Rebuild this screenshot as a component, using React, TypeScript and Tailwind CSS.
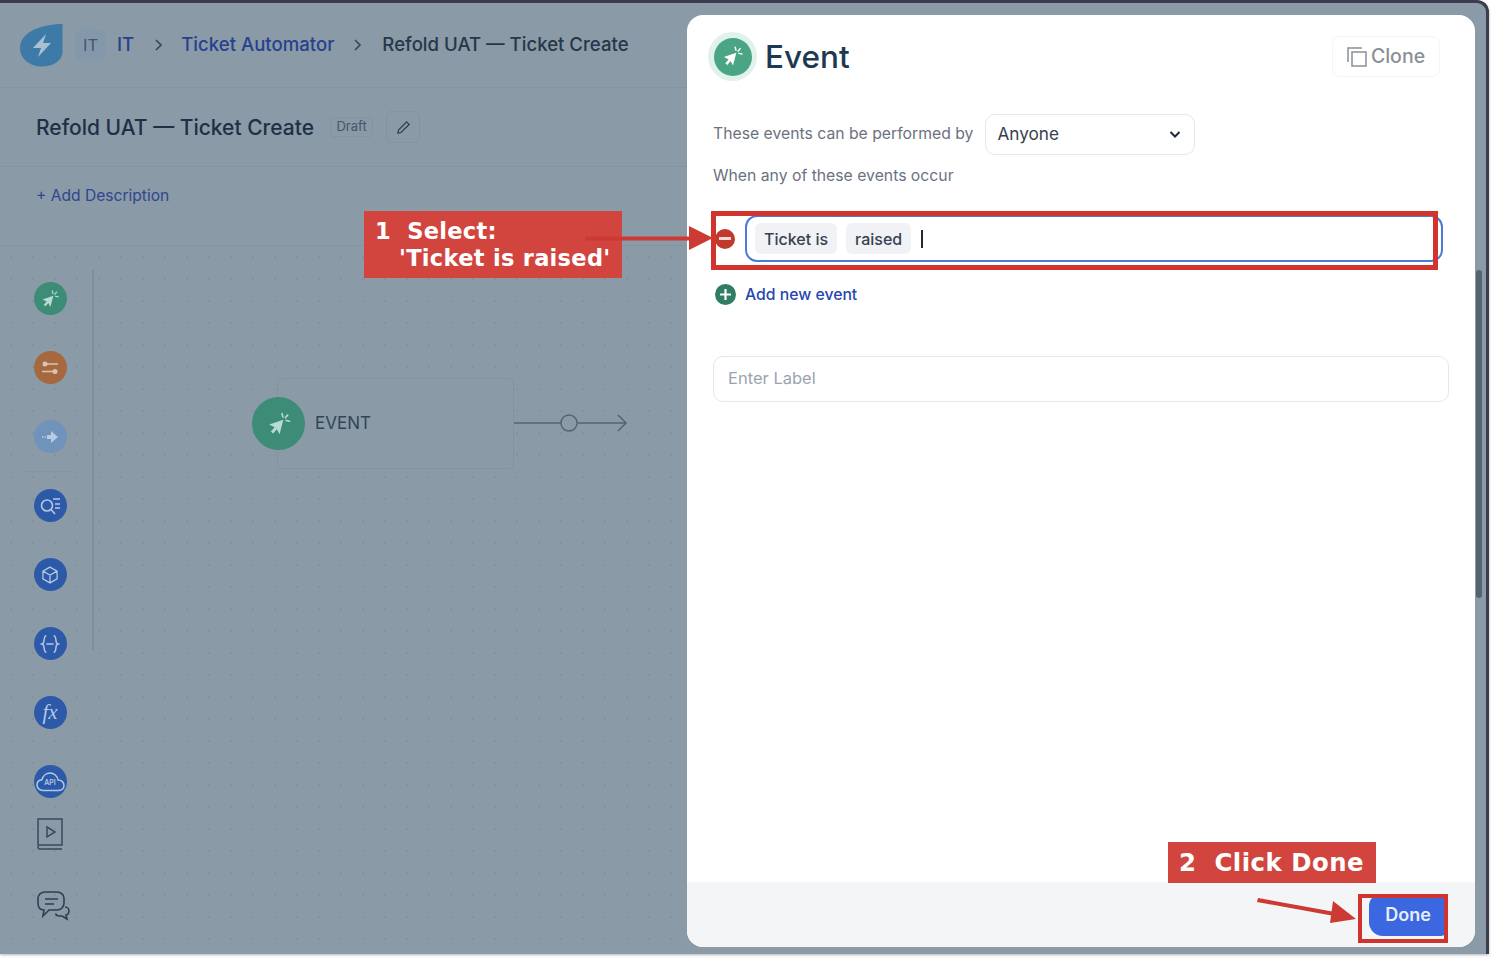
import React from "react";

const Click = ({ s = 20 }: { s?: number }) => (
  <svg width={s} height={s} viewBox="0 0 24 24" fill="none">
    <path d="M16 8 3 12.500l5 2.500-3.500 4 2 1.800 3.500-4 2.500 4.700z" fill="currentColor" />
    <path d="M14.800 2.400l.8 3M21.800 9.400l-3.200-.7M20 3.800l-2.200 2.400" stroke="currentColor" strokeWidth="1.500" strokeLinecap="round" />
  </svg>
);

const Circle = ({ c, children }: { c: string; children: React.ReactNode }) => (
  <div className={`flex h-[33px] w-[33px] items-center justify-center rounded-full ${c}`}>{children}</div>
);

export default function App() {
  return (
    <div className="relative h-[958px] w-[1494px] overflow-hidden bg-white font-['Inter',sans-serif]">
      <div className="flex h-[954px] w-[1489px] rounded-tr-xl border-t-[3px] border-r-[3px] border-[#3c3c4e] bg-[#8a9aa6] shadow-[0_1px_3px_rgba(0,0,0,0.3)]">
        {/* left column */}
        <div className="flex h-full w-[687px] flex-col">
          <div className="flex h-[85px] items-center border-b border-[#84949f] pl-[20px] text-[18.600px] font-medium">
            <svg width="43" height="43" viewBox="0 0 43 43">
              <path d="M42.500 0C26 0 0 6 0 24c0 11 10 18.500 22 18.500 11 0 20.500-6 20.500-14.500z" fill="#3e7aa8" />
              <path d="M26 10 13 24h8l-3 9 13-14h-8z" fill="#a9c0d2" />
            </svg>
            <div className="ml-[12px] flex h-[32px] w-[31px] items-center justify-center rounded-lg bg-[#8498ab] text-[16.500px] font-normal text-[#45566a]">IT</div>
            <span className="ml-[11px] text-[#27418f]">IT</span>
            <svg className="ml-[20px]" width="10" height="14" viewBox="0 0 10 14" fill="none"><path d="M2 2l5 5-5 5" stroke="#3a4a5c" strokeWidth="1.700" /></svg>
            <span className="ml-[17px] text-[#27418f]">Ticket Automator</span>
            <svg className="ml-[19px]" width="10" height="14" viewBox="0 0 10 14" fill="none"><path d="M2 2l5 5-5 5" stroke="#3a4a5c" strokeWidth="1.700" /></svg>
            <span className="ml-[19px] text-[#27374a]">Refold UAT — Ticket Create</span>
          </div>
          <div className="flex h-[79px] items-center border-b border-[#84949f] pl-[36px]">
            <span className="pt-[2px] text-[21px] font-medium text-[#1f3045]">Refold UAT — Ticket Create</span>
            <span className="ml-[16px] flex h-[20px] w-[43px] items-center justify-center rounded border border-[#84949f] text-[13px] text-[#45566a]">Draft</span>
            <span className="ml-[13px] flex h-[32px] w-[34px] items-center justify-center rounded-md border border-[#84949f] text-[#2f3f52]">
              <svg width="15" height="15" viewBox="0 0 24 24" fill="none" stroke="currentColor" strokeWidth="2"><path d="M17 3l4 4L8 20l-5 1 1-5z" /></svg>
            </span>
          </div>
          <div className="flex h-[79px] items-center border-b border-[#84949f] pb-[20px] pl-[36px] text-[15.600px] text-[#2f478f]">+ Add Description</div>
          <div className="relative flex-1 bg-[radial-gradient(circle,#82929e_1.200px,transparent_1.300px)] bg-[size:22px_22px]">
            <div className="flex w-[100px] flex-col items-center pt-[36px]">
              <Circle c="bg-[#3c8c78] text-[#b9dcd2]"><Click s={20} /></Circle>
              <div className="mt-[36px]">
                <Circle c="bg-[#a5683f] text-[#d9c4b2]">
                  <svg width="20" height="20" viewBox="0 0 20 20" fill="currentColor"><circle cx="5" cy="6" r="2.500" /><path d="M7 5.200h11v1.500H7zM2 12.700h11v1.500H2z" /><circle cx="15" cy="13.500" r="2.500" /></svg>
                </Circle>
              </div>
              <div className="mt-[36px]">
                <Circle c="bg-[#6f93bb] text-[#b8cbe0]">
                  <svg width="20" height="20" viewBox="0 0 20 20" fill="currentColor"><path d="M11 4l7 6-7 6v-4H7V8h4z" /><path d="M2 9.200h1.500v1.500H2zM4.500 9.200H6v1.500H4.500z" /></svg>
                </Circle>
              </div>
              <div className="mt-[18px] h-px w-[48px] bg-[#84949f]" />
              <div className="mt-[17px]">
                <Circle c="bg-[#2c5aa8] text-[#b5c8e4]">
                  <svg width="24" height="24" viewBox="0 0 24 24" fill="none" stroke="currentColor" strokeWidth="1.600"><circle cx="9" cy="11.500" r="5.500" /><path d="M13 15.500l4 4.500M15 5h7M17 10h5M17 14h5" /></svg>
                </Circle>
              </div>
              <div className="mt-[36px]">
                <Circle c="bg-[#2c5aa8] text-[#b5c8e4]">
                  <svg width="20" height="20" viewBox="0 0 24 24" fill="none" stroke="currentColor" strokeWidth="1.500"><path d="M12 2.500l8.500 4.800v9.400L12 21.500l-8.500-4.800V7.300zM3.500 7.300 12 12l8.500-4.700M12 12v9.500" /></svg>
                </Circle>
              </div>
              <div className="mt-[36px]">
                <Circle c="bg-[#2c5aa8] text-[#b5c8e4]">
                  <svg width="22" height="22" viewBox="0 0 24 24" fill="none" stroke="currentColor" strokeWidth="1.600"><path d="M8 3C5 3 6 8 5 10.500 4.500 11.500 3 12 3 12s1.500.5 2 1.500C6 16 5 21 8 21M16 3c3 0 2 5 3 7.500.5 1 2 1.500 2 1.500s-1.500.5-2 1.500c-1 2.500 0 7.500-3 7.500M8 12h8" /></svg>
                </Circle>
              </div>
              <div className="mt-[36px]">
                <Circle c="bg-[#2c5aa8] text-[#b5c8e4]">
                  <span className="font-['Liberation_Serif',serif] text-[21px] italic leading-none">fx</span>
                </Circle>
              </div>
              <div className="mt-[36px]">
                <div className="relative flex h-[33px] w-[33px] items-center justify-center rounded-full bg-[#2c5aa8] text-[#b5c8e4]">
                  <svg width="29" height="22" viewBox="0 0 29 22" fill="none" stroke="currentColor" strokeWidth="1.500"><path d="M7 19.500C3.500 19.500 1 17 1 14c0-3 2-5 5-5.300C7 4.500 10.500 2 14 2c4 0 7.500 3 8 7 3.500 0 6 2.500 6 5.500s-2.500 5-6 5z" /></svg>
                  <span className="absolute top-[14px] text-[7px] font-semibold leading-none">API</span>
                </div>
              </div>
              <div className="mt-[20px] text-[#3a4a5c]">
                <svg width="26" height="32" viewBox="0 0 26 32" fill="none" stroke="currentColor" strokeWidth="1.500"><path d="M1 27V1h24v26H3a2 2 0 0 0 0 4h22" /><path d="M10 9l8 5-8 5z" /></svg>
              </div>
              <div className="ml-[6px] mt-[41px] text-[#2f3f52]">
                <svg width="33" height="30" viewBox="0 0 33 30" fill="none" stroke="currentColor" strokeWidth="1.600"><path d="M8 1h12c4 0 7 3 7 6v5c0 4-3 7-7 7h-8l-6 6 1-6C3 19 1 16 1 12V7c0-3 3-6 7-6z" /><path d="M8 8h13M8 13h9" /><path d="M28 16c2.500 0 4 2 4 4s-1.500 4-3 4l1 4-5-3h-3c-1.500 0-3-1-3.500-2.500" /></svg>
              </div>
            </div>
            <div className="absolute left-[92px] top-[24px] h-[380px] w-[2px] bg-[#7f8f9c]" />
            {/* canvas node */}
            <div className="absolute left-[277px] top-[132px] h-[91px] w-[237px] rounded border border-[#84949f] bg-[#8a9aa6]" />
            <div className="absolute left-[252px] top-[151px] flex h-[53px] w-[53px] items-center justify-center rounded-full bg-[#3c8c78] text-[#b9dcd2]"><Click s={26} /></div>
            <span className="absolute left-[315px] top-[166px] text-[17px] leading-[22px] text-[#33445a]">EVENT</span>
            <svg className="absolute left-[514px] top-[165px]" width="116" height="24" viewBox="0 0 116 24" fill="none" stroke="#55656f" strokeWidth="1.500">
              <path d="M0 12h47M64 12h48M104 4l8 8-8 8" />
              <circle cx="55" cy="12" r="8" />
            </svg>
          </div>
        </div>

        {/* modal */}
        <div className="mb-[7px] mt-[12px] flex w-[788px] flex-col rounded-[16px] bg-white">
          <div className="flex h-[85px] items-center pb-[2px] pl-[21px] pr-[35px]">
            <div className="flex h-[49px] w-[49px] items-center justify-center rounded-full bg-[#e1f2ec]">
              <div className="flex h-[38px] w-[38px] items-center justify-center rounded-full bg-[#4aa585] text-white"><Click s={23} /></div>
            </div>
            <span className="ml-[8px] text-[31.500px] font-medium text-[#1e3a52]">Event</span>
            <div className="ml-auto flex h-[41px] w-[108px] items-center justify-center gap-[4px] rounded-lg border border-[#f3f4f6] text-[19.500px] font-medium text-[#8b9096]">
              <svg width="20" height="20" viewBox="0 0 20 20" fill="none" stroke="currentColor" strokeWidth="1.500"><path d="M1 15V1h14" /><path d="M5 5h14v14H5z" /></svg>
              Clone
            </div>
          </div>
          <div className="flex items-center pl-[26px] pt-[14px]">
            <span className="mb-[2px] text-[15.750px] text-[#6b7280]">These events can be performed by</span>
            <div className="ml-[12px] flex h-[41px] w-[210px] items-center justify-between rounded-[10px] border border-[#e5e7eb] pb-[2px] pl-[11px] pr-[12px] text-[17.200px] text-[#374151]">
              Anyone
              <svg width="14" height="14" viewBox="0 0 14 14" fill="none" stroke="#1f2937" strokeWidth="2"><path d="M2.500 5 7 9.500 11.500 5" /></svg>
            </div>
          </div>
          <div className="pl-[26px] pt-[11px] text-[15.750px] leading-[20px] text-[#6b7280]">When any of these events occur</div>
          <div className="flex items-center pl-[28px] pt-[29px]">
            <div className="flex h-[20px] w-[20px] items-center justify-center rounded-full bg-[#c0392b]"><span className="h-[3px] w-[12px] bg-[#f3d9d6]" /></div>
            <div className="ml-[10px] flex h-[47px] w-[698px] items-center gap-[9px] rounded-[12px] border-2 border-[#4a7bd6] pl-[8px]">
              <span className="flex h-[31px] items-center rounded-md bg-[#f0f2f5] px-[9px] text-[16px] font-medium text-[#374151]">Ticket is</span>
              <span className="flex h-[31px] items-center rounded-md bg-[#f0f2f5] px-[9px] text-[16px] font-medium text-[#374151]">raised</span>
              <span className="ml-[1px] h-[18px] w-[2px] bg-[#1f2937]" />
            </div>
          </div>
          <div className="flex items-center pl-[28px] pt-[21px]">
            <div className="flex h-[21px] w-[21px] items-center justify-center rounded-full bg-[#2f7d63]">
              <svg width="13" height="13" viewBox="0 0 13 13" stroke="#fff" strokeWidth="2.200"><path d="M6.500 1v11M1 6.500h11" /></svg>
            </div>
            <span className="ml-[9px] text-[15.750px] font-medium text-[#2747b0]">Add new event</span>
          </div>
          <div className="ml-[26px] mt-[49px] flex h-[46px] w-[736px] items-center rounded-[10px] border border-[#e5e7eb] pl-[14px] text-[16.500px] text-[#9ca3af]">Enter Label</div>
          <div className="mt-auto flex h-[65px] items-start justify-end rounded-b-[16px] bg-[#f4f5f7] pr-[28px] pt-[13px]">
            <div className="flex h-[41px] w-[78px] items-center justify-center rounded-bl-[14px] rounded-r-md rounded-tl-[10px] bg-[#3b68e0] pb-[2px] text-[18px] font-semibold text-[#e8eefc]">Done</div>
          </div>
        </div>

        {/* right strip scrollbar */}
        <div className="flex-1 pt-[267px]"><div className="ml-[1px] h-[328px] w-[6px] rounded bg-[#55656f]" /></div>
      </div>

      {/* annotations */}
      <div className="absolute left-[364px] top-[211px] h-[67px] w-[258px] bg-[#d2453f] pl-[11px] pt-[7px] font-['DejaVu_Sans',sans-serif] text-[22.500px] font-bold leading-[27px] tracking-[0.3px] text-white">
        <div className="whitespace-pre">1  Select:</div>
        <div className="whitespace-pre pl-[24px]">'Ticket is raised'</div>
      </div>
      <svg className="absolute left-[585px] top-[224px]" width="130" height="28" viewBox="0 0 130 28" fill="#cc3a33">
        <path d="M0 12.500h105v4H0z" />
        <path d="M104 2l24 12-24 12z" />
      </svg>
      <div className="absolute left-[711px] top-[211px] h-[59px] w-[727px] border-[5px] border-[#d0342c]" />
      <div className="absolute left-[1168px] top-[842px] flex h-[41px] w-[208px] items-center whitespace-pre bg-[#d2453f] pl-[11px] pt-[2px] font-['DejaVu_Sans',sans-serif] text-[24.400px] font-bold tracking-[0.5px] text-white">2  Click Done</div>
      <svg className="absolute left-[1255px] top-[895px]" width="104" height="32" viewBox="0 0 104 32" fill="#cc3a33">
        <path d="M3 3 80 17l-.7 4L2 7z" />
        <path d="M78 6l23 18-26 4z" />
      </svg>
      <div className="absolute left-[1358px] top-[894px] h-[49px] w-[90px] border-[4px] border-[#d0342c]" />
    </div>
  );
}
